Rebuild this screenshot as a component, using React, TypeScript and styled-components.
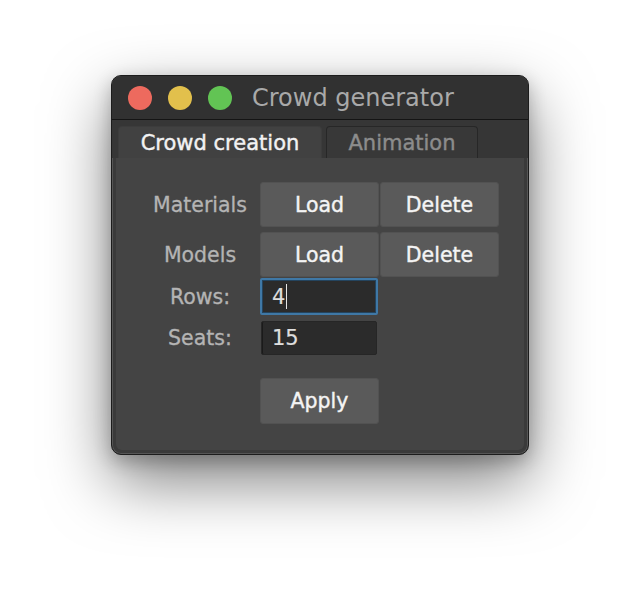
import React from "react";
import styled, { createGlobalStyle } from "styled-components";

const Global = createGlobalStyle`
  html, body { margin: 0; padding: 0; background: #ffffff; }
  body { width: 640px; height: 602px; overflow: hidden; font-family: "DejaVu Sans", "Liberation Sans", sans-serif; }
`;

const Page = styled.div`
  width: 640px;
  height: 602px;
  box-sizing: border-box;
  padding: 75px 0 0 111px;
  display: flex;
  align-items: flex-start;
`;

const Window = styled.div`
  width: 418px;
  height: 380px;
  box-sizing: border-box;
  border-radius: 10px;
  background: #3a3a3a;
  border: 1px solid #1c1c1c;
  box-shadow: inset 0 0 0 1px #555, 0 26px 64px rgba(0, 0, 0, 0.5), 0 6px 18px rgba(0, 0, 0, 0.24);
  display: flex;
  flex-direction: column;
  overflow: hidden;
`;

const TitleBar = styled.div`
  height: 43px;
  flex: none;
  display: flex;
  align-items: center;
  gap: 16px;
  padding-left: 16px;
  background: #313131;
  border-bottom: 1px solid #141414;
`;

const Light = styled.span<{ $c: string }>`
  width: 24px;
  height: 24px;
  border-radius: 50%;
  background: ${(p) => p.$c};
  flex: none;
`;

const Title = styled.span`
  margin-left: 4px;
  font-size: 24px;
  color: #a9a9a9;
  line-height: 1;
`;

const TabBar = styled.div`
  display: flex;
  gap: 4px;
  padding: 6px 0 0 6px;
  height: 38px;
  box-sizing: border-box;
  flex: none;
  background: #363636;
`;

const Tab = styled.div<{ $active?: boolean; $w: number }>`
  width: ${(p) => p.$w}px;
  height: 32px;
  box-sizing: border-box;
  border-radius: 4px 4px 0 0;
  display: flex;
  align-items: center;
  justify-content: center;
  font-size: 21px;
  background: ${(p) => (p.$active ? "#414141" : "#383838")};
  color: ${(p) => (p.$active ? "#f2f2f2" : "#8c8c8c")};
  border: 1px solid ${(p) => (p.$active ? "#3c3c3c" : "#272727")};
  border-bottom: none;
  -webkit-text-stroke: 0.4px currentColor;
`;

const Panel = styled.div`
  flex: 1;
  margin: 0 4px 4px 4px;
  background: #444444;
  border-radius: 0 0 6px 6px;
  display: flex;
  flex-direction: column;
  align-items: center;
  padding-top: 23px;
`;

const FormRow = styled.div<{ $mt: number; $h: number }>`
  display: grid;
  grid-template-columns: 120px 120px 120px;
  height: ${(p) => p.$h}px;
  margin-top: ${(p) => p.$mt}px;
  align-items: stretch;
`;

const Label = styled.div`
  display: flex;
  align-items: center;
  justify-content: center;
  font-size: 20.5px;
  color: #b4b4b4;
  -webkit-text-stroke: 0.3px currentColor;
`;

const Button = styled.button`
  margin: 0 1px 0 0;
  box-sizing: border-box;
  background: #5a5a5a;
  border: 1px solid #525252;
  border-radius: 3px;
  color: #f4f4f4;
  font-family: "DejaVu Sans", "Liberation Sans", sans-serif;
  font-size: 20.5px;
  -webkit-text-stroke: 0.4px currentColor;
  padding: 0;
  display: flex;
  align-items: center;
  justify-content: center;
`;

const Input = styled.div<{ $focus?: boolean; $inset?: number }>`
  box-sizing: border-box;
  width: ${(p) => 118 - (p.$inset ?? 0) * 2}px;
  margin-left: ${(p) => p.$inset ?? 0}px;
  background: #2b2b2b;
  border-radius: 2px;
  border: ${(p) => (p.$focus ? "2px solid #3f78a6" : "1px solid #262626")};
  box-shadow: ${(p) => (p.$focus ? "inset 0 0 0 1px #24445e" : "inset 1px 0 0 #1a1a1a")};
  display: flex;
  align-items: center;
  padding-left: 10px;
  font-size: 21px;
  color: #dedede;
  -webkit-text-stroke: 0.2px currentColor;
`;

const Caret = styled.span`
  display: inline-block;
  width: 1px;
  height: 25px;
  background: #e6e6e6;
  margin-left: 1px;
`;

export default function App() {
  return (
    <>
      <Global />
      <Page>
        <Window>
          <TitleBar>
            <Light $c="#ed6a5e" />
            <Light $c="#e2c04c" />
            <Light $c="#62c454" />
            <Title>Crowd generator</Title>
          </TitleBar>
          <TabBar>
            <Tab $active $w={204}>Crowd creation</Tab>
            <Tab $w={152}>Animation</Tab>
          </TabBar>
          <Panel>
            <FormRow $mt={1} $h={45}>
              <Label>Materials</Label>
              <Button>Load</Button>
              <Button>Delete</Button>
            </FormRow>
            <FormRow $mt={5} $h={45}>
              <Label>Models</Label>
              <Button>Load</Button>
              <Button>Delete</Button>
            </FormRow>
            <FormRow $mt={1} $h={37}>
              <Label>Rows:</Label>
              <Input $focus>
                4<Caret />
              </Input>
            </FormRow>
            <FormRow $mt={6} $h={34}>
              <Label>Seats:</Label>
              <Input $inset={1}>15</Input>
            </FormRow>
            <FormRow $mt={23} $h={46}>
              <span />
              <Button>Apply</Button>
            </FormRow>
          </Panel>
        </Window>
      </Page>
    </>
  );
}
